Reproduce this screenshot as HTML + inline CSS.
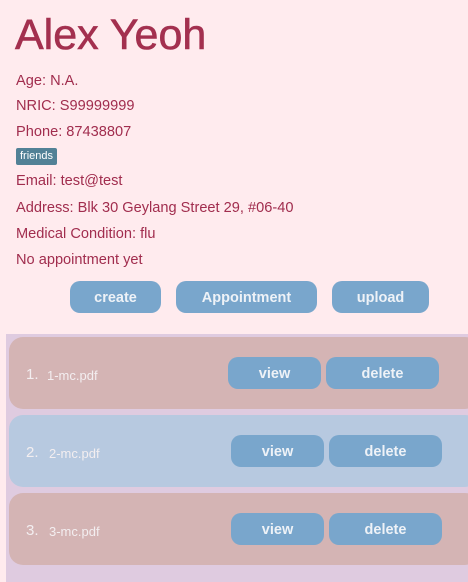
<!DOCTYPE html>
<html><head><meta charset="utf-8"><style>
*{margin:0;padding:0;box-sizing:border-box}
body{width:468px;height:582px;background:#ffebee;font-family:"Liberation Sans",sans-serif;position:relative;overflow:hidden;color:#a12d4e}
.t{position:absolute;left:16px;font-size:14.6px;line-height:18px;white-space:nowrap}
h1{position:absolute;left:15px;top:9px;font-size:43px;font-weight:normal;color:#a3304f;line-height:52px;-webkit-text-stroke:0.6px #a3304f}
.tag{position:absolute;left:16px;top:148px;width:41px;height:17px;background:#528196;color:#fff;font-size:11px;line-height:17px;text-align:center;border-radius:2px}
.b{position:absolute;background:#79a6cc;color:#eef2f7;font-weight:bold;font-size:14.5px;display:flex;align-items:center;justify-content:center;padding-top:1px;border-radius:10px;height:32px}
.panel{position:absolute;left:6px;top:334px;width:462px;height:248px;background:#dfcbe0}
.card{position:absolute;left:9px;width:470px;height:72px;border-radius:14px}
.n{position:absolute;font-size:15px;color:#f3eef0}
.f{position:absolute;font-size:13px;color:#f3eef0}
</style></head><body>
<h1>Alex Yeoh</h1>
<div class="t" style="top:72px">Age: N.A.</div>
<div class="t" style="top:97px">NRIC: S99999999</div>
<div class="t" style="top:123px">Phone: 87438807</div>
<div class="tag">friends</div>
<div class="t" style="top:172px">Email: test@test</div>
<div class="t" style="top:199px">Address: Blk 30 Geylang Street 29, #06-40</div>
<div class="t" style="top:225px">Medical Condition: flu</div>
<div class="t" style="top:251px">No appointment yet</div>
<div class="b" style="left:70px;top:281px;width:91px">create</div>
<div class="b" style="left:176px;top:281px;width:141px">Appointment</div>
<div class="b" style="left:332px;top:281px;width:97px">upload</div>
<div class="panel"></div>
<div class="card" style="top:337px;background:#d4b4b4"></div>
<div class="card" style="top:415px;background:#b7c9e0"></div>
<div class="card" style="top:493px;background:#d4b4b4"></div>
<div class="n" style="left:26px;top:366px">1.</div><div class="f" style="left:47px;top:368px">1-mc.pdf</div>
<div class="n" style="left:26px;top:444px">2.</div><div class="f" style="left:49px;top:446px">2-mc.pdf</div>
<div class="n" style="left:26px;top:522px">3.</div><div class="f" style="left:49px;top:524px">3-mc.pdf</div>
<div class="b" style="left:228px;top:357px;width:93px">view</div>
<div class="b" style="left:326px;top:357px;width:113px">delete</div>
<div class="b" style="left:231px;top:435px;width:93px">view</div>
<div class="b" style="left:329px;top:435px;width:113px">delete</div>
<div class="b" style="left:231px;top:513px;width:93px">view</div>
<div class="b" style="left:329px;top:513px;width:113px">delete</div>
</body></html>
